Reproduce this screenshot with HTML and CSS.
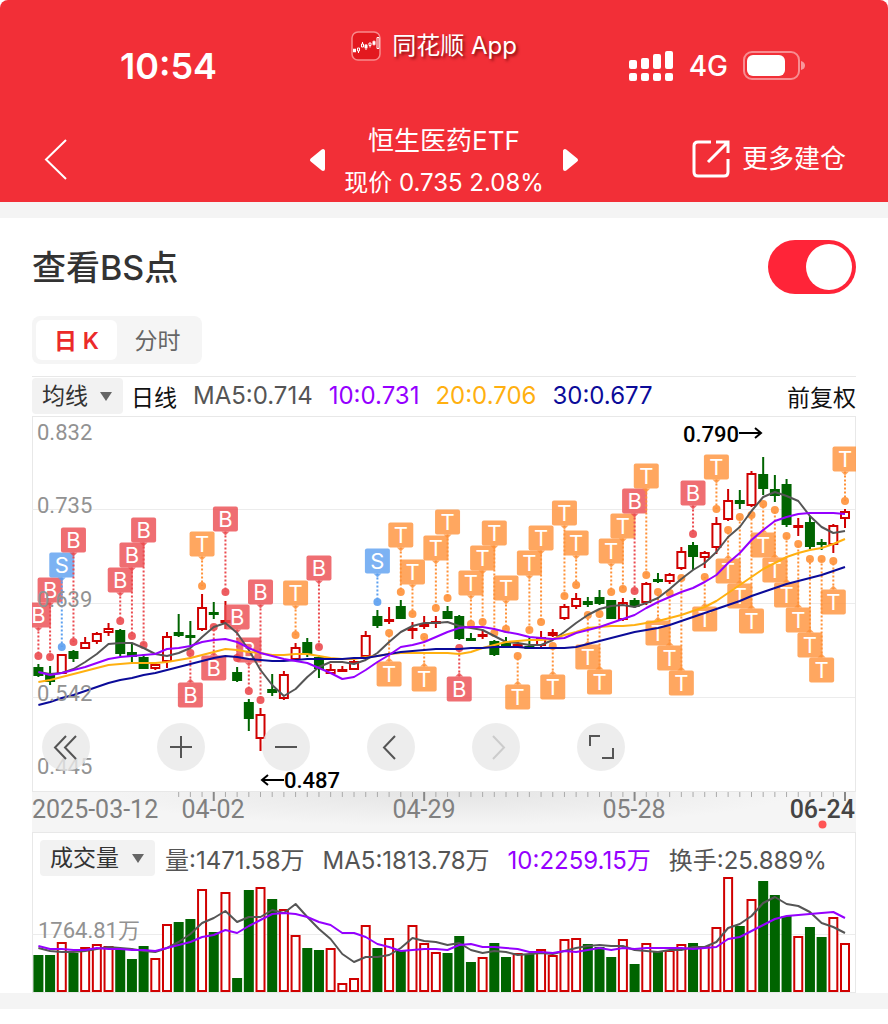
FILE: index.html
```html
<!DOCTYPE html>
<html lang="zh-CN">
<head>
  <meta charset="UTF-8" />
  <meta name="viewport" content="width=device-width, initial-scale=1.0"/>
  <title>恒生医药ETF</title>
  <link rel="stylesheet" href="styles.css">
</head>
<body>
  <header class="header">
    <div class="status">
      <span class="time">10:54</span>
      <div class="brand">
        <svg width="30" height="30" viewBox="0 0 30 30" fill="none" stroke="#fff">
          <rect x="1" y="1" width="28" height="28" rx="6" fill="#e3191f" stroke="#f98a8c" stroke-width="1.5"/>
          <path d="M2 19.500h3M13.500 15.500h3M21.500 12h3" stroke-width="3.500"/>
          <path d="M6.500 17h2v3h-2zM10.500 13h2v3h-2zM18 12h2v2.500h-2zM26 6.500h2v11h-2zM7.500 20v2M11.500 11v2M19 14.500v2M15 13v6M23 9.500v5" stroke-width="1"/>
        </svg>
        <span>同花顺 App</span>
      </div>
      <div class="signals">
        <svg width="45" height="32" viewBox="0 0 45 32" fill="#fff">
          <rect x="0" y="10" width="8" height="9" rx="2"/><rect x="12" y="8" width="8" height="11" rx="2"/>
          <rect x="24" y="4" width="8" height="15" rx="2"/><rect x="36" y="1" width="8" height="18" rx="2"/>
          <rect x="0" y="23" width="8" height="8" rx="2"/><rect x="12" y="23" width="8" height="8" rx="2"/>
          <rect x="24" y="23" width="8" height="8" rx="2"/><rect x="36" y="23" width="8" height="8" rx="2"/>
        </svg>
        <span>4G</span>
        <svg width="63" height="30" viewBox="0 0 63 30">
          <rect x="1" y="1" width="55" height="27" rx="8" fill="none" stroke="#fff" stroke-opacity=".45" stroke-width="2"/>
          <rect x="4" y="4" width="38" height="21" rx="6" fill="#fff"/>
          <path d="M58 10q4 1 4 4.500t-4 4.500z" fill="#fff" fill-opacity=".5"/>
        </svg>
      </div>
    </div>
    <nav class="nav">
      <button class="icon-btn back" aria-label="返回">
        <svg width="24" height="42" viewBox="0 0 24 42" fill="none" stroke="#fff" stroke-width="2"><path d="M22 1L2 20.500L22 40"/></svg>
      </button>
      <div class="stock">
        <button class="icon-btn" aria-label="上一只">
          <svg width="17" height="24" viewBox="0 0 17 24" fill="#fff" stroke="#fff" stroke-width="4" stroke-linejoin="round"><path d="M14 3v18L3 12z"/></svg>
        </button>
        <div class="stock-text">
          <h1>恒生医药ETF</h1>
          <p>现价 0.735 2.08%</p>
        </div>
        <button class="icon-btn" aria-label="下一只">
          <svg width="17" height="24" viewBox="0 0 17 24" fill="#fff" stroke="#fff" stroke-width="4" stroke-linejoin="round"><path d="M3 3v18L14 12z"/></svg>
        </button>
      </div>
      <a class="more" href="#">
        <svg width="38" height="38" viewBox="0 0 38 38" fill="none" stroke="#fff" stroke-width="3">
          <path d="M19 2H6Q2 2 2 6V32Q2 36 6 36H32Q36 36 36 32V19"/><path d="M24 2H36V13M36 2L16 22"/>
        </svg>
        更多建仓
      </a>
    </nav>
  </header>

  <main class="card">
    <div class="title-row">
      <label for="bs">查看BS点</label>
      <input class="switch" type="checkbox" id="bs" checked>
    </div>
    <div class="tabs">
      <button class="tab active">日 K</button>
      <button class="tab">分时</button>
    </div>

    <div class="legend">
      <div class="picker">
        <select aria-label="主图指标"><option>均线</option></select>
      </div>
      <span class="black">日线</span>
      <span class="ma5">MA5:0.714</span>
      <span class="ma10">10:0.731</span>
      <span class="ma20">20:0.706</span>
      <span class="ma30">30:0.677</span>
      <span class="black adjust">前复权</span>
    </div>

    <div class="kline">
      <svg id="kline" class="chart" viewBox="32 416 824 376"></svg>
      <div class="controls">
        <button class="first" aria-label="最早"><svg viewBox="0 0 48 48"><path d="M24 13L13 24.500L24 36M34 13L23 24.500L34 36"/></svg></button>
        <button aria-label="放大"><svg viewBox="0 0 48 48"><path d="M13 24H35M24 13V35"/></svg></button>
        <button aria-label="缩小"><svg viewBox="0 0 48 48"><path d="M13 24H35"/></svg></button>
        <button aria-label="向前"><svg viewBox="0 0 48 48"><path d="M28 13L17 24.500L28 36"/></svg></button>
        <button aria-label="向后" disabled><svg viewBox="0 0 48 48"><path d="M21 13L32 24.500L21 36"/></svg></button>
        <button aria-label="全屏"><svg viewBox="0 0 48 48"><path d="M13 23V13H23M36 25V35H25"/></svg></button>
      </div>
    </div>
    <svg id="axis" class="chart axis" viewBox="32 792 824 40"></svg>

    <div class="volume">
      <div class="legend">
        <div class="picker">
          <select aria-label="副图指标"><option>成交量</option></select>
        </div>
        <span class="ma5">量:1471.58万</span>
        <span class="ma5">MA5:1813.78万</span>
        <span class="ma10">10:2259.15万</span>
        <span class="ma5">换手:25.889%</span>
      </div>
      <svg id="volume" class="chart" viewBox="32 876 824 117"></svg>
    </div>
  </main>

  <script src="chart.js"></script>
</body>
</html>
```
FILE: styles.css
```css
* {
  box-sizing: border-box;
}

body {
  margin: 0;
  font-family: Inter, "Noto Sans CJK SC", sans-serif;
  font-size: 23px;
  background: #fff;
  color: #333;
}

button, select, input {
  font: inherit;
  color: inherit;
  margin: 0;
}

svg {
  display: block;
}

.header {
  background: #f22f37;
  color: #fff;
  border-radius: 8px 8px 0 0;
  padding: 16px 32px 0;
}

.status {
  display: grid;
  grid-template-columns: 1fr auto 1fr;
  align-items: center;
  height: 100px;
}

.time {
  font-size: 36px;
  font-weight: 600;
  padding-left: 88px;
}

.brand {
  display: flex;
  align-items: center;
  gap: 11px;
  padding: 0 20px 40px 0;
  font-size: 24px;
  line-height: 30px;
  text-shadow: 2px 2px 3px rgba(90, 0, 0, 0.7);
}

.signals {
  display: flex;
  align-items: center;
  justify-content: flex-end;
  gap: 15px;
  padding-right: 50px;
  font-size: 28px;
  font-weight: 500;
}

.nav {
  display: grid;
  grid-template-columns: 1fr auto 1fr;
  align-items: center;
  height: 86px;
  padding-bottom: 2px;
}

.icon-btn {
  background: none;
  border: none;
  padding: 0;
  cursor: pointer;
}

.back {
  justify-self: start;
  padding-left: 12px;
}

.stock {
  display: flex;
  align-items: center;
  gap: 18px;
}

.stock-text {
  padding-top: 4px;
  text-align: center;
}

.stock h1 {
  margin: 0;
  font-size: 26px;
  font-weight: 400;
  line-height: 42px;
}

.stock p {
  margin: 0;
  font-size: 24px;
  line-height: 42px;
}

.more {
  display: flex;
  align-items: center;
  justify-content: flex-end;
  gap: 12px;
  padding: 0 10px 2px 0;
  font-size: 26px;
  line-height: 36px;
  color: #fff;
  text-decoration: none;
}

.card {
  border-top: 16px solid #f4f4f4;
  border-bottom: 16px solid #f4f4f4;
  padding: 22px 32px 0;
}

.title-row {
  display: flex;
  align-items: center;
  justify-content: space-between;
  height: 54px;
  margin-bottom: 22px;
  font-size: 34px;
  font-weight: 500;
}

.title-row label {
  padding-bottom: 3px;
}

.switch {
  appearance: none;
  width: 88px;
  height: 54px;
  padding: 4px;
  border-radius: 27px;
  background: #ccc;
  display: flex;
}

.switch::before {
  content: "";
  width: 46px;
  height: 46px;
  border-radius: 50%;
  background: #fff;
}

.switch:checked {
  background: #ff2438;
  justify-content: flex-end;
}

.tabs {
  display: inline-flex;
  padding: 4px;
  border-radius: 8px;
  background: #f5f5f5;
  margin-bottom: 12px;
  vertical-align: top;
}

.tab {
  width: 81px;
  height: 40px;
  padding: 0 0 3px;
  border: none;
  border-radius: 6px;
  background: none;
  color: #666;
}

.tab.active {
  background: #fff;
  color: #eb2a2a;
  font-weight: 600;
}

.legend {
  display: flex;
  align-items: center;
  gap: 16px;
  height: 40px;
  padding-bottom: 2px;
  border-top: 1px solid #e8e8e8;
  white-space: nowrap;
}

.legend .picker {
  margin-right: -8px;
}

.picker {
  position: relative;
}

.picker select {
  appearance: none;
  height: 36px;
  width: 91px;
  padding: 0 10px;
  border: none;
  border-radius: 4px;
  background: #f2f2f2;
}

.picker::after {
  content: "";
  position: absolute;
  right: 11px;
  top: 14px;
  border: 6px solid transparent;
  border-top: 9px solid #666;
  border-bottom: none;
  pointer-events: none;
}

.black { color: #111; }
.ma5 { color: #555; }
.ma10 { color: #9500ff; }
.ma20 { color: #ffb010; }
.ma30 { color: #0b0b99; }

.ma5, .ma10, .ma20, .ma30 {
  font-size: 24px;
}

.legend .adjust {
  margin-left: auto;
}

.chart {
  width: 100%;
  height: auto;
}

.chart text {
  font-family: Roboto, "Noto Sans CJK SC", sans-serif;
  font-size: 22px;
  fill: #929292;
}

.chart .peak {
  font-weight: 500;
  fill: #000;
}

.chart .mark {
  font-family: Inter, sans-serif;
  fill: #fff;
}

.axis {
  background: radial-gradient(ellipse at 50% 0, #e4e4e4, #f5f5f5 60%);
}

.axis .date {
  font-size: 25px;
  fill: #808080;
}

.axis .today {
  fill: #444;
  font-weight: 500;
}

.kline {
  position: relative;
}

.controls {
  position: absolute;
  left: 10px;
  bottom: 21px;
  display: flex;
  gap: 57px;
}

.controls button {
  width: 48px;
  height: 48px;
  padding: 0;
  border: none;
  border-radius: 50%;
  background: rgba(233, 233, 233, 0.8);
}

.controls .first {
  margin-right: 10px;
}

.controls path {
  fill: none;
  stroke: #555;
  stroke-width: 2;
}

.controls button:disabled path {
  stroke: #ccc;
}

.volume {
  box-shadow: inset 0 0 0 1px #e8e8e8;
}

.volume .legend {
  height: 44px;
  gap: 18px;
  padding: 8px 8px 0;
  border: none;
}

.volume select {
  width: 115px;
}
```
FILE: chart.js
```js
const STEP = 11.69;
const RED = "#d00000";
const GREEN = "#006400";
const COLORS = { B: "#eb4a4f", S: "#5b9ff0", T: "#ff9138" };
const x = i => 38.4 + STEP * i;

// high, body top, body bottom, low, kind (r = rise, g = fall, f = flat rise), volume top
const candles = [
  [664,667,676,677,"g",955],[666,674,682,685,"g",955],[654,654,674,674,"r",942],[650,651,659,662,"g",953],
  [637,642,649,649,"r",947],[632,633,642,644,"r",944],[623,628,633,636,"r",946],[629,630,654,657,"g",949],
  [643,652,657,662,"g",959],[654,657,669,669,"g",946],[662,664,669,670,"r",958],[632,636,662,668,"r",924],
  [614,632,636,637,"g",922],[621,635,638,647,"g",919],[594,607,630,631,"r",889],[602,612,614,619,"g",932],
  [601,620,622,629,"f",892],[667,672,681,682,"g",978],[699,702,719,731,"g",890],[708,714,739,751,"r",887],
  [674,689,693,696,"g",899],[671,674,699,700,"r",909],[643,647,660,661,"r",935],[638,642,654,657,"g",948],
  [655,657,669,678,"g",950],[664,669,674,674,"r",948],[666,669,672,672,"f",983],[660,661,670,670,"r",978],
  [631,635,657,658,"r",925],[610,616,626,628,"g",948],[607,619,622,624,"f",938],[600,606,619,619,"g",950],
  [622,628,630,639,"f",925],[616,624,626,629,"f",943],[616,621,622,628,"f",952],[606,611,619,619,"g",953],
  [615,616,639,640,"g",936],[633,638,640,640,"g",962],[630,634,637,639,"f",957],[640,641,655,656,"g",943],
  [637,643,647,648,"g",957],[640,644,647,647,"f",953],[638,646,649,649,"g",954],[631,637,646,647,"r",949],
  [629,632,635,637,"r",955],[604,606,619,620,"r",939],[593,598,607,609,"r",938],[597,601,605,607,"g",944],
  [590,597,604,605,"g",947],[600,600,619,619,"g",957],[598,602,620,621,"r",939],[598,600,607,608,"g",964],
  [582,583,603,605,"r",943],[573,579,581,583,"g",952],[573,574,582,584,"r",950],[547,551,569,570,"r",944],
  [542,545,557,570,"g",943],[551,552,558,568,"r",946],[517,523,548,554,"r",927],[489,500,520,521,"r",877],
  [490,500,504,509,"g",926],[471,473,506,507,"r",899],[457,474,489,495,"g",881],[475,489,496,502,"g",895],
  [479,484,525,527,"g",916],[518,525,527,536,"f",936],[516,522,547,549,"g",927],[539,542,544,550,"g",937],
  [524,525,545,553,"r",917],[509,511,519,528,"r",943]
];

// day, letter, centre of the tag, centre of the dot
const marks = [
  [0,"B",615,656],[1,"B",590,657],[2,"S",565,647],[3,"B",540,642],[7,"B",580,621],[8,"B",555,636],
  [9,"B",530,645],[13,"B",695,653],[14,"T",544,586],[15,"B",668,627],[16,"B",519,592],[18,"B",650,691],
  [17,"B",617,658],[19,"B",592,700],[22,"T",593,635],[24,"B",568,647],[29,"S",561,602],[30,"T",674,633],
  [31,"T",535,592],[32,"T",572,614],[33,"T",679,637],[34,"T",548,608],[35,"T",522,598],[36,"B",689,648],
  [37,"T",583,624],[38,"T",558,622],[39,"T",533,633],[40,"T",588,629],[41,"T",697,656],[42,"T",563,630],
  [43,"T",538,622],[44,"T",687,646],[45,"T",513,596],[46,"T",543,585],[47,"T",657,615],[48,"T",682,614],
  [49,"T",551,592],[50,"T",526,589],[51,"B",501,591],[52,"T",476,575],[53,"T",633,592],[54,"T",658,593],
  [55,"T",683,578],[56,"B",493,534],[57,"T",619,577],[58,"T",467,509],[59,"T",571,530],[60,"T",596,517],
  [61,"T",621,515],[62,"T",545,504],[63,"T",570,510],[64,"T",595,536],[65,"T",620,544],[66,"T",645,559],
  [67,"T",670,559],[68,"T",602,561],[69,"T",459,501]
];

const ma5 = [672,674,673,669,662,654,644,643,643,648,654,656,653,648,637,627,623,633,650,670,685,696,689,677,667,662,662,664,660,653,642,632,626,623,623,622,626,628,630,636,642,643,645,645,640,632,623,615,609,606,605,607,603,598,589,579,570,563,552,537,527,511,497,492,496,501,516,527,533,531];
const ma10 = [672,675,673,670,667,663,659,657,656,655,654,649,648,646,642,640,639,642,648,653,656,659,661,663,668,673,679,677,670,662,655,647,645,642,637,632,628,627,627,629,632,634,637,638,639,638,633,630,627,623,619,615,608,602,597,592,588,582,575,563,553,540,530,521,517,514,513,513,513,514];
const ma20 = [682,680,677,674,671,668,665,664,663,663,663,662,660,658,655,652,649,650,652,653,655,655,654,654,656,658,659,659,657,656,654,653,653,653,653,653,654,652,648,645,642,641,640,640,639,635,632,628,627,626,626,625,623,621,618,615,611,607,601,593,585,577,569,563,557,553,550,548,544,539];
const ma30 = [705,702,698,695,691,687,683,680,678,675,673,670,667,664,661,658,656,657,659,660,661,661,660,659,659,659,659,658,658,656,654,652,651,650,649,649,649,648,648,647,647,647,648,648,648,648,647,644,641,638,635,632,630,628,625,621,617,613,609,605,601,596,592,588,584,581,578,575,571,567];
const vol5 = [948,951,952,952,951,949,947,948,949,951,952,948,942,934,923,918,911,922,917,917,910,913,904,917,929,939,954,962,957,957,955,948,938,941,942,945,943,950,953,951,952,955,954,953,954,951,948,946,945,946,946,950,951,952,950,950,947,947,942,928,924,916,903,897,904,906,912,923,927,933];
const vol10 = [946,949,949,950,950,948,949,949,950,950,951,948,945,942,937,935,930,933,926,920,914,913,914,917,922,925,933,933,937,944,947,951,950,949,949,950,945,944,947,947,948,949,952,952,953,951,952,950,948,950,948,949,948,948,948,948,949,948,947,939,937,931,925,919,916,915,914,913,912,918];

const line = (ys, color) =>
  `<polyline points="${ys.map((y, i) => x(i).toFixed(1) + "," + y).join(" ")}" fill="none" stroke="${color}" stroke-width="2" stroke-linejoin="round"/>`;

const rule = y => `<path d="M32 ${y}H855" stroke="#ececec"/>`;

function candle([high, top, bottom, low, kind], i) {
  const color = kind === "g" ? GREEN : RED;
  const cx = x(i);
  const wick = `<path d="M${cx} ${high}V${top}M${cx} ${bottom}V${low}" stroke="${color}" stroke-width="2"/>`;
  if (kind === "r") {
    return wick + `<rect x="${cx - 4}" y="${top + 1}" width="8" height="${Math.max(bottom - top - 2, 2)}" fill="#fff" stroke="${color}" stroke-width="2"/>`;
  }
  // flat bodies still need to be thick enough to see
  return wick + `<rect x="${cx - 5}" y="${top}" width="10" height="${Math.max(bottom - top, 3)}" fill="${color}"/>`;
}

function mark([i, letter, y, dot]) {
  const cx = x(i);
  const color = COLORS[letter];
  const dir = dot > y ? 1 : -1;
  const edge = y + dir * 12.5;
  return `<path d="M${cx} ${edge}V${dot}" stroke="${color}" stroke-width="2" stroke-dasharray="2 2"/>
    <circle cx="${cx}" cy="${dot}" r="4" fill="${color}" fill-opacity=".9"/>
    <g fill="${color}" fill-opacity=".8"><rect x="${cx - 12.5}" y="${y - 12.5}" width="25" height="25" rx="2"/>
    <path d="M${cx - 4} ${edge}h8l-4 ${dir * 4}z"/></g>
    <text class="mark" x="${cx}" y="${y + 8}" text-anchor="middle">${letter}</text>`;
}

document.getElementById("kline").innerHTML = `
  <rect x="32.5" y="416.5" width="823" height="375" fill="none" stroke="#e8e8e8"/>
  ${rule(509.5)}${rule(603.5)}${rule(697.5)}
  ${candles.map(candle).join("")}
  ${marks.map(mark).join("")}
  ${line(ma5, "#555")}${line(ma20, "#ffb010")}${line(ma30, "#0b0b99")}${line(ma10, "#9500ff")}
  <text x="37" y="440">0.832</text><text x="37" y="513">0.735</text><text x="37" y="607">0.639</text>
  <text x="37" y="701">0.542</text><text x="37" y="774">0.445</text>
  <text class="peak" x="683" y="442">0.790</text><text class="peak" x="284" y="788">0.487</text>
  <path d="M739 433H761M755 428L761 433L755 438M284 780H262M268 775L262 780L268 785" fill="none" stroke="#000" stroke-width="2"/>`;

let ticks = "";
for (let i = 12; i < 70; i++) {
  const major = (i - 15) % 18 === 0;
  ticks += `<path d="M${x(i)} 792V${major ? 801 : 797}" stroke="${major ? "#888" : "#aaa"}" stroke-width="${major ? 2 : 1}"/>`;
}
document.getElementById("axis").innerHTML = ticks + `
  <text class="date" x="32" y="818">2025-03-12</text>
  <text class="date" x="213" y="818" text-anchor="middle">04-02</text>
  <text class="date" x="424" y="818" text-anchor="middle">04-29</text>
  <text class="date" x="634" y="818" text-anchor="middle">05-28</text>
  <text class="date today" x="855" y="818" text-anchor="end">06-24</text>
  <circle cx="822.5" cy="824.5" r="4" fill="#f55"/>`;

document.getElementById("volume").innerHTML = `
  ${rule(934.5)}
  ${candles.map((c, i) => c[4] === "g"
    ? `<rect x="${x(i) - 5}" y="${c[5]}" width="10" height="${992 - c[5]}" fill="${GREEN}"/>`
    : `<rect x="${x(i) - 4}" y="${c[5] + 1}" width="8" height="${990 - c[5]}" fill="#fff" stroke="${RED}" stroke-width="2"/>`).join("")}
  ${line(vol5, "#555")}${line(vol10, "#9500ff")}
  <text x="38" y="938">1764.81万</text>`;
```
